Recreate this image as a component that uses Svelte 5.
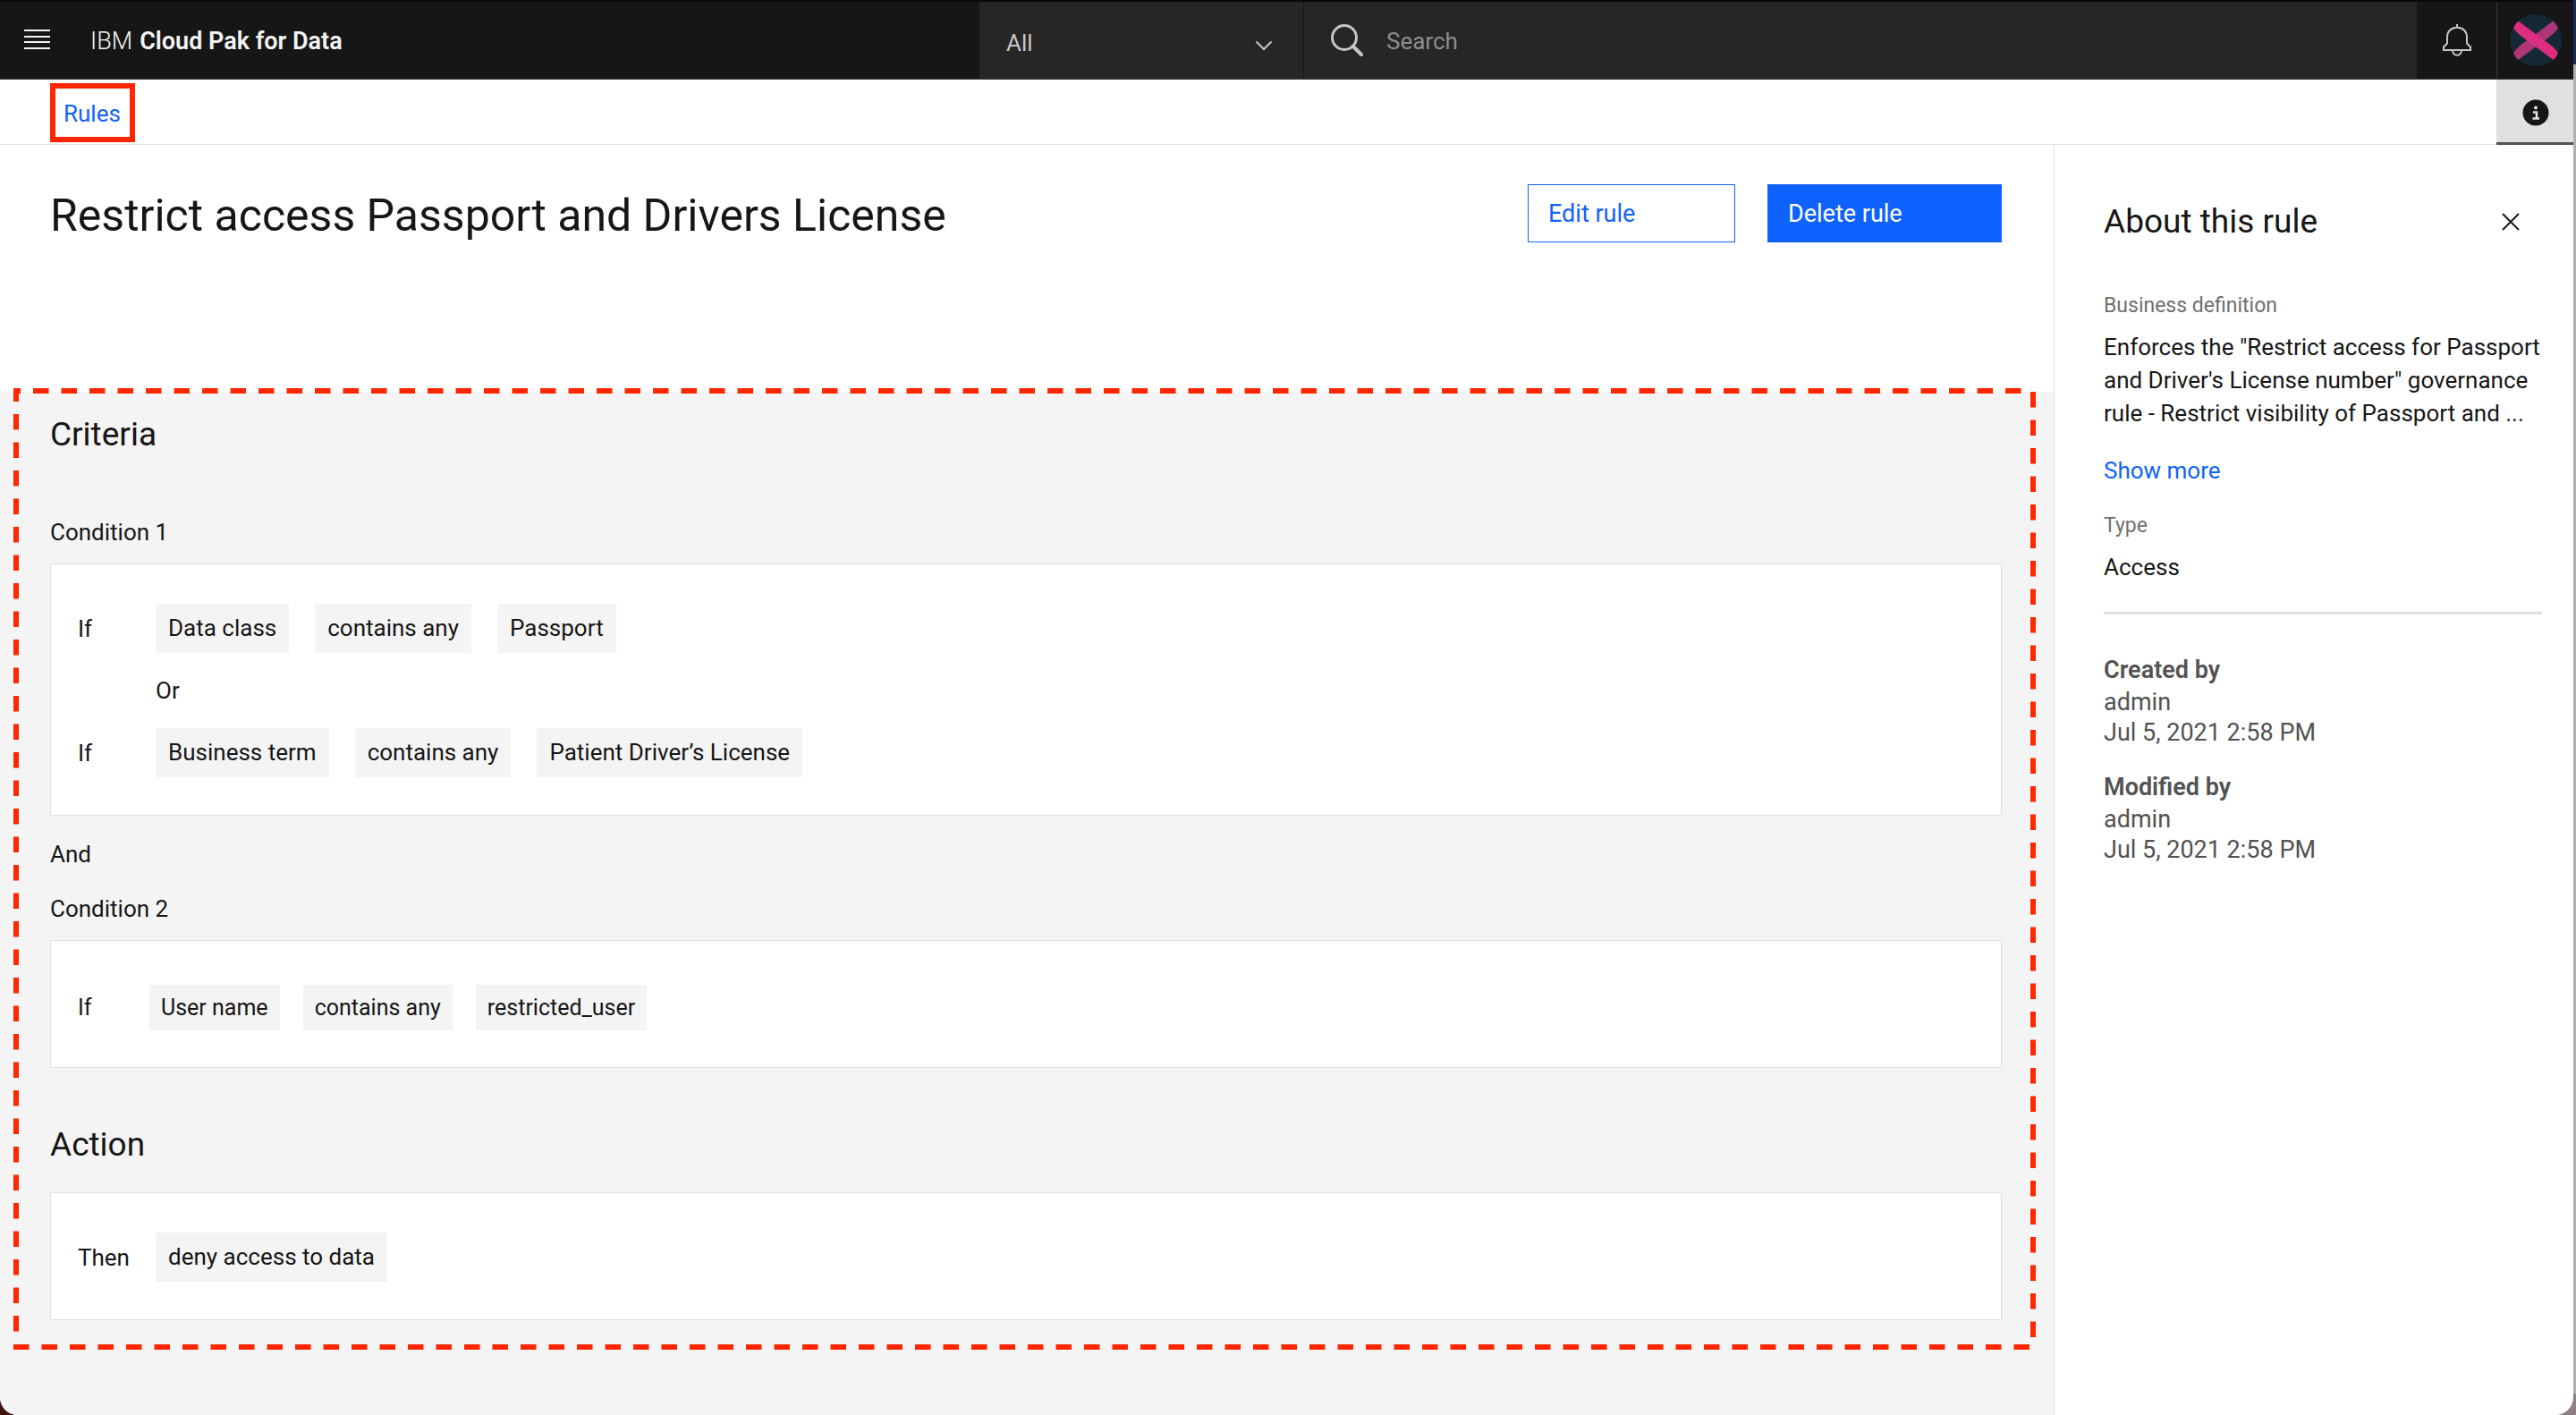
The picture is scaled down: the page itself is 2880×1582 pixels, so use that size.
<script>
  const condition1 = [
    ['Data class', 'contains any', 'Passport'],
    ['Business term', 'contains any', 'Patient Driver’s License'],
  ];
  const condition2 = ['User name', 'contains any', 'restricted_user'];
  const history = [
    { label: 'Created by', user: 'admin', date: 'Jul 5, 2021 2:58 PM' },
    { label: 'Modified by', user: 'admin', date: 'Jul 5, 2021 2:58 PM' },
  ];
  const edgeDash = '17.5 14';
</script>

<div class="desktop">
  <div class="window">
    <header class="topbar">
      <button class="menu" aria-label="Menu">
        <svg width="30" height="24" viewBox="0 0 30 24" aria-hidden="true">
          <path d="M0 2h29M0 9h29M0 15h29M0 22h29" stroke="#f4f4f4" stroke-width="2" />
        </svg>
      </button>
      <div class="brand">IBM <b>Cloud Pak for Data</b></div>
      <div class="scope">
        <select aria-label="Search scope">
          <option>All</option>
        </select>
        <svg class="chevron" width="20" height="12" viewBox="0 0 20 12" aria-hidden="true">
          <path d="M1.5 1.5 10 10l8.500-8.500" fill="none" stroke="#c6c6c6" stroke-width="2" />
        </svg>
      </div>
      <label class="search">
        <svg width="38" height="38" viewBox="0 0 38 38" aria-hidden="true">
          <circle cx="16" cy="16" r="13.500" fill="none" stroke="#c6c6c6" stroke-width="3" />
          <path d="m25.500 25.500 9.500 9.500" stroke="#c6c6c6" stroke-width="4" stroke-linecap="round" />
        </svg>
        <input type="text" placeholder="Search" aria-label="Search" />
      </label>
      <button class="bell" aria-label="Notifications">
        <svg width="32" height="36" viewBox="0 0 32 36" fill="none" stroke="#c6c6c6" stroke-width="2" aria-hidden="true">
          <path d="M16 0v4M5 14.500C5 8 9.500 3.800 16 3.800S27 8 27 14.500V21.500l4 4V29H1v-3.500l4-4z" />
          <path d="M11 29c0 7.500 10 7.500 10 0" />
        </svg>
      </button>
      <button class="profile" aria-label="Profile">
        <svg width="58" height="58" viewBox="0 0 58 58" aria-hidden="true">
          <circle cx="29" cy="29" r="29" fill="#152935" />
          <path d="M48.500 7.500 21 28Q6 38 4 43.500q2 4.500 5.300 7.500L37 30.500Q51 21 54 15q-2-4-5.500-7.500z" fill="#ae3578" />
          <path d="M9.500 7.500 37 28q15 10 17 15.500-2 4.500-5.300 7.500L21 30.500Q7 21 4 15q2-4 5.500-7.500z" fill="#dd2d81" />
        </svg>
      </button>
    </header>

    <nav class="crumbs">
      <a class="crumb" href="#rules">Rules</a>
      <button class="info" aria-label="About this rule">
        <svg width="30" height="30" viewBox="0 0 30 30" aria-hidden="true">
          <circle cx="15" cy="15" r="14.500" fill="#161616" />
          <circle cx="15" cy="9.500" r="2" fill="#e0e0e0" />
          <path d="M12 14.500h4V21M11.500 21.500h7.500" fill="none" stroke="#e0e0e0" stroke-width="2.500" />
        </svg>
      </button>
    </nav>

    <div class="body">
      <main>
        <div class="page-head">
          <h1>Restrict access Passport and Drivers License</h1>
          <div class="buttons">
            <button class="btn edit">Edit rule</button>
            <button class="btn delete">Delete rule</button>
          </div>
        </div>

        <div class="rule">
          <h2>Criteria</h2>
          <h3 class="first">Condition 1</h3>
          <section class="card">
            {#each condition1 as row, i}
              {#if i > 0}<div class="or">Or</div>{/if}
              <div class="row">
                <span class="word">If</span>
                <div class="chips">
                  {#each row as chip}<span class="chip">{chip}</span>{/each}
                </div>
              </div>
            {/each}
          </section>
          <p class="and">And</p>
          <h3>Condition 2</h3>
          <section class="card compact">
            <div class="row">
              <span class="word">If</span>
              <div class="chips">
                {#each condition2 as chip}<span class="chip">{chip}</span>{/each}
              </div>
            </div>
          </section>
          <h2 class="action">Action</h2>
          <section class="card">
            <div class="row">
              <span class="word">Then</span>
              <div class="chips"><span class="chip">deny access to data</span></div>
            </div>
          </section>

          <div class="outline">
            <svg width="100%" height="100%" stroke="#ff2600" stroke-width="6" aria-hidden="true">
              <line x1="0" y1="3" x2="99.600%" y2="3" stroke-dasharray={edgeDash} stroke-dashoffset="9.5" />
              <line x1="3" y1="0" x2="3" y2="98.500%" stroke-dasharray={edgeDash} stroke-dashoffset="2.5" />
              <line class="right" x1="100%" y1="4" x2="100%" y2="99%" stroke-dasharray={edgeDash} />
              <line class="bottom" x1="0" y1="100%" x2="99.800%" y2="100%" stroke-dasharray={edgeDash} />
            </svg>
          </div>
        </div>
      </main>

      <aside>
        <div class="about-head">
          <h2>About this rule</h2>
          <button class="close" aria-label="Close">
            <svg width="20" height="20" viewBox="0 0 20 20" aria-hidden="true">
              <path d="m1 1 18 18M19 1 1 19" stroke="#161616" stroke-width="2" />
            </svg>
          </button>
        </div>
        <div class="label">Business definition</div>
        <p class="definition">
          Enforces the "Restrict access for Passport<br />and Driver's License number" governance<br />rule - Restrict
          visibility of Passport and ...
        </p>
        <a class="more" href="#more">Show more</a>
        <div class="label type">Type</div>
        <div class="value">Access</div>
        <hr />
        {#each history as item}
          <div class="history">
            <b>{item.label}</b>
            <span>{item.user}</span>
            <span>{item.date}</span>
          </div>
        {/each}
      </aside>
    </div>
  </div>
</div>

<style>
  :global(body) {
    margin: 0;
  }
  .desktop {
    min-height: 100vh;
    display: flex;
    background:
      linear-gradient(#1c2a5a, #1c2a5a) right top / 3px 72px no-repeat,
      linear-gradient(#42130e, #42130e) left bottom / 24px 24px no-repeat,
      linear-gradient(#8d8184, #8d8184) right bottom / 24px 24px no-repeat,
      #b0b0b0;
    font-family: Roboto, 'Liberation Sans', sans-serif;
    font-size: 26px;
    line-height: 36px;
    color: #161616;
  }
  .window {
    flex: 1;
    min-width: 0;
    margin-right: 3px;
    display: flex;
    flex-direction: column;
    background: #fff;
    border-radius: 0 0 20px 20px;
    overflow: hidden;
  }
  button,
  input,
  select {
    font: inherit;
    margin: 0;
    padding: 0;
    border: 0;
    border-radius: 0;
    background: none;
    color: inherit;
  }
  h1,
  h2,
  h3,
  p {
    margin: 0;
    font-weight: 400;
  }
  a {
    color: #0f62fe;
    text-decoration: none;
  }
  svg {
    display: block;
  }

  .topbar {
    display: flex;
    height: 86px;
    border-top: 2px solid #080808;
    border-bottom: 1px solid #393939;
    background: #161616;
    color: #f4f4f4;
  }
  .menu {
    width: 101px;
    padding: 0 0 2px 27px;
  }
  .brand {
    flex: 1;
    display: flex;
    align-items: center;
    gap: 8px;
    padding-top: 2px;
    font-size: 27px;
    font-weight: 300;
  }
  .brand b {
    font-weight: 600;
  }
  .scope {
    position: relative;
    width: 362px;
    background: #262626;
    border-right: 1px solid #161616;
  }
  .scope select {
    appearance: none;
    width: 100%;
    height: 100%;
    padding: 6px 60px 0 30px;
    color: #c6c6c6;
  }
  .chevron {
    position: absolute;
    right: 34px;
    top: 43px;
    pointer-events: none;
  }
  .search {
    display: flex;
    align-items: center;
    width: 1215px;
    padding-left: 29px;
    background: #262626;
  }
  .search input {
    flex: 1;
    margin-left: 25px;
    padding-top: 2px;
    outline: none;
  }
  .search input::placeholder {
    color: #8d8d8d;
    opacity: 1;
  }
  .bell {
    width: 89px;
    display: grid;
    place-items: center;
  }
  .profile {
    width: 86px;
    display: grid;
    place-items: center;
    border-left: 1px solid #393939;
  }

  .crumbs {
    display: flex;
    align-items: flex-start;
    justify-content: space-between;
    height: 72px;
    padding-left: 56px;
    border-bottom: 1px solid #e0e0e0;
  }
  .crumb {
    display: flex;
    align-items: center;
    height: 52px;
    margin-top: 4px;
    padding: 2px 10px 0 9px;
    border: 6px solid #ff2600;
  }
  .info {
    display: grid;
    place-items: center;
    width: 86px;
    height: 73px;
    padding: 3px 0 0 2px;
    background: #e0e0e0;
    border-bottom: 3px solid #525252;
  }

  .body {
    flex: 1;
    display: flex;
  }
  main {
    flex: 1;
    min-width: 0;
    display: flex;
    flex-direction: column;
  }
  .page-head {
    display: flex;
    justify-content: space-between;
    align-items: flex-start;
    height: 232px;
    padding: 44px 58px 0 56px;
  }
  h1 {
    font-size: 50px;
    line-height: 70px;
  }
  .buttons {
    display: flex;
    gap: 36px;
  }
  .btn {
    height: 65px;
    padding: 1px 0 0 22px;
    text-align: left;
    border: 1px solid #0f62fe;
    font-size: 27px;
  }
  .edit {
    width: 232px;
    color: #0f62fe;
  }
  .delete {
    width: 262px;
    background: #0f62fe;
    color: #fff;
  }

  .rule {
    position: relative;
    flex: 1;
    padding: 24px 58px 60px 56px;
    background: #f4f4f4;
  }
  h2 {
    font-size: 37px;
    line-height: 48px;
  }
  h3 {
    font-size: 26px;
    line-height: 36px;
    margin-bottom: 17px;
  }
  .first {
    margin-top: 67px;
  }
  .and {
    margin: 25px 0;
  }
  .action {
    margin: 62px 0 29px;
  }
  .card {
    padding: 44px 30px 42px;
    background: #fff;
    border: 1px solid #e0e0e0;
  }
  .row {
    display: flex;
    align-items: center;
  }
  .word {
    width: 87px;
  }
  .chips {
    display: flex;
    gap: 29px;
  }
  .chip {
    padding: 0 14px;
    line-height: 55px;
    background: #f4f4f4;
  }
  .or {
    padding-left: 87px;
    line-height: 84px;
  }
  .compact {
    padding: 49px 30px 41px;
    font-size: 25px;
  }
  .compact .word {
    width: 80px;
  }
  .compact .chips {
    gap: 26px;
  }
  .compact .chip {
    padding: 0 13px;
    line-height: 51px;
  }
  .outline {
    position: absolute;
    top: -4px;
    left: 15px;
    right: 20px;
    height: 1075px;
    pointer-events: none;
  }
  .right {
    transform: translateX(-3px);
  }
  .bottom {
    transform: translateY(-3px);
  }

  aside {
    width: 490px;
    padding: 62px 35px 0 55px;
    border-left: 1px solid #e0e0e0;
  }
  .about-head {
    display: flex;
    justify-content: space-between;
    align-items: center;
    margin-bottom: 56px;
  }
  .close {
    padding: 0 25px;
  }
  .label {
    font-size: 23px;
    line-height: 28px;
    color: #6f6f6f;
    margin-bottom: 14px;
  }
  .definition {
    line-height: 37px;
    white-space: nowrap;
    margin-bottom: 27px;
  }
  .more {
    display: block;
  }
  .type {
    margin-top: 30px;
  }
  hr {
    height: 3px;
    margin: 32px 0 43px;
    border: 0;
    background: #e0e0e0;
  }
  .history {
    display: flex;
    flex-direction: column;
    margin-bottom: 25px;
    font-size: 27px;
    line-height: 34px;
    color: #525252;
  }
  .history b {
    line-height: 38px;
    font-weight: 600;
  }
</style>
